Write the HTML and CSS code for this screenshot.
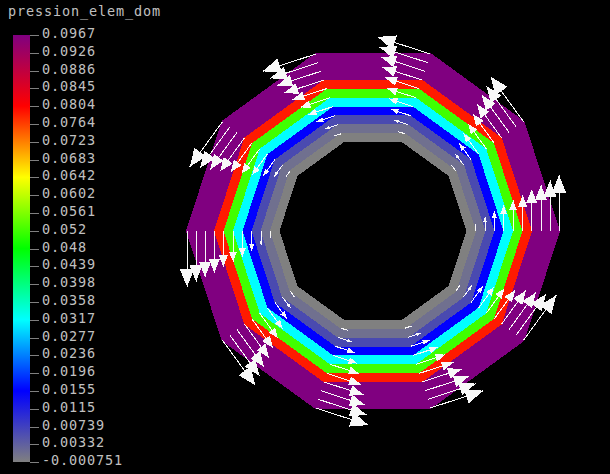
FILE: index.html
```html
<!DOCTYPE html>
<html lang="en">
<head>
<meta charset="utf-8">
<title>pression_elem_dom</title>
<link rel="stylesheet" href="styles.css">
</head>
<body>
<main class="page">
  <section class="legend">
    <h1 class="title">pression_elem_dom</h1>
    <div class="scale">
      <div class="bar"></div>
      <ul class="ticks">
        <li>0.0967</li><li>0.0926</li><li>0.0886</li><li>0.0845</li><li>0.0804</li>
        <li>0.0764</li><li>0.0723</li><li>0.0683</li><li>0.0642</li><li>0.0602</li>
        <li>0.0561</li><li>0.052</li><li>0.048</li><li>0.0439</li><li>0.0398</li>
        <li>0.0358</li><li>0.0317</li><li>0.0277</li><li>0.0236</li><li>0.0196</li>
        <li>0.0155</li><li>0.0115</li><li>0.00739</li><li>0.00332</li><li>-0.000751</li>
      </ul>
    </div>
  </section>
  <svg class="plot" viewBox="180 0 430 474" width="430" height="474" aria-label="Pressure field on a decagonal ring">
    <defs>
      <polygon id="deca" points="100,0 80.9,58.78 30.9,95.11 -30.9,95.11 -80.9,58.78 -100,0 -80.9,-58.78 -30.9,-95.11 30.9,-95.11 80.9,-58.78"/>
      <g id="ray" class="ray">
        <line x1="186" y1="0" x2="186" y2="-55.7"/><polygon points="186,-55.7 178.6,-37.7 193.4,-37.7"/>
        <line x1="177" y1="0" x2="177" y2="-50.7"/><polygon points="177,-50.7 170.4,-34.2 183.6,-34.2"/>
        <line x1="168" y1="0" x2="168" y2="-46"/><polygon points="168,-46 162,-31 174,-31"/>
        <line x1="158.7" y1="0" x2="158.7" y2="-41.5"/><polygon points="158.7,-41.5 153.2,-28 164.2,-28"/>
        <line x1="149.7" y1="0" x2="149.7" y2="-36"/><polygon points="149.7,-36 145,-24 154.4,-24"/>
        <line x1="140" y1="0" x2="140" y2="-30.7"/><polygon points="140,-30.7 136,-20.7 144,-20.7"/>
        <line x1="130.7" y1="0" x2="130.7" y2="-25.7"/><polygon points="130.7,-25.7 127.3,-17.2 134,-17.2"/>
        <line x1="121.3" y1="0" x2="121.3" y2="-20"/><polygon points="121.3,-20 118.6,-13 124,-13"/>
        <line x1="112" y1="0" x2="112" y2="-14"/><polygon points="112,-14 110.2,-9.5 113.8,-9.5"/>
        <line x1="102.3" y1="0" x2="102.3" y2="-7.3"/>
      </g>
    </defs>
    <g transform="translate(373 231)">
      <use href="#deca" class="band-purple" transform="scale(1.87)"/>
      <use href="#deca" class="band-red" transform="scale(1.59)"/>
      <use href="#deca" class="band-green" transform="scale(1.495)"/>
      <use href="#deca" class="band-cyan" transform="scale(1.4)"/>
      <use href="#deca" class="band-blue" transform="scale(1.305)"/>
      <use href="#deca" class="band-slate" transform="scale(1.215)"/>
      <use href="#deca" class="band-haze" transform="scale(1.125)"/>
      <use href="#deca" class="band-grey" transform="scale(1.03)"/>
      <use href="#deca" class="band-hole" transform="scale(0.935)"/>
      <use href="#ray"/>
      <use href="#ray" transform="rotate(-36)"/>
      <use href="#ray" transform="rotate(-72)"/>
      <use href="#ray" transform="rotate(-108)"/>
      <use href="#ray" transform="rotate(-144)"/>
      <use href="#ray" transform="rotate(-180)"/>
      <use href="#ray" transform="rotate(-216)"/>
      <use href="#ray" transform="rotate(-252)"/>
      <use href="#ray" transform="rotate(-288)"/>
      <use href="#ray" transform="rotate(-324)"/>
    </g>
  </svg>
</main>
</body>
</html>
```
FILE: styles.css
```css
* { box-sizing: border-box; }

html, body {
  margin: 0;
  padding: 0;
  background: #000;
}

.page {
  display: flex;
  width: 610px;
  height: 474px;
  overflow: hidden;
  background: #000;
}

.legend {
  flex: 0 0 180px;
  padding: 3px 0 0 8px;
  color: #c0c0c0;
  font-family: "DejaVu Sans Mono", monospace;
  font-size: 13.5px;
  letter-spacing: 0.87px;
}

.title {
  margin: 0;
  font: inherit;
  height: 17px;
  line-height: 17px;
}

.scale {
  display: flex;
  margin: 15px 0 0 5px;
  height: 427px;
}

.bar {
  flex: 0 0 17px;
  background: linear-gradient(to bottom, #800080 0%, #f00 16.67%, #ff0 33.33%, #0f0 50%, #0ff 66.67%, #00f 83.33%, #808080 100%);
}

.ticks {
  list-style: none;
  margin: -10px 0 0;
  padding: 0;
  height: 445px;
  display: grid;
  grid-template-rows: repeat(25, 17.8px);
}

.ticks li {
  height: 17.8px;
  line-height: 17.8px;
  position: relative;
  padding-left: 12px;
  white-space: nowrap;
}

.ticks li::before {
  content: "";
  position: absolute;
  left: 0;
  top: 10px;
  width: 9px;
  height: 1px;
  background: #808080;
}

.plot {
  display: block;
  flex: 0 0 430px;
  shape-rendering: crispEdges;
}

.band-purple { fill: #800080; }
.band-red { fill: #ff1a00; }
.band-green { fill: #40ff00; }
.band-cyan { fill: #00ffff; }
.band-blue { fill: #0000ff; }
.band-slate { fill: #4a4ab0; }
.band-haze { fill: #70708f; }
.band-grey { fill: #808080; }
.band-hole { fill: #000; }

.ray polygon { fill: #f8f8f8; stroke: none; }
.ray line { stroke: #f8f8f8; stroke-width: 1; }
```
